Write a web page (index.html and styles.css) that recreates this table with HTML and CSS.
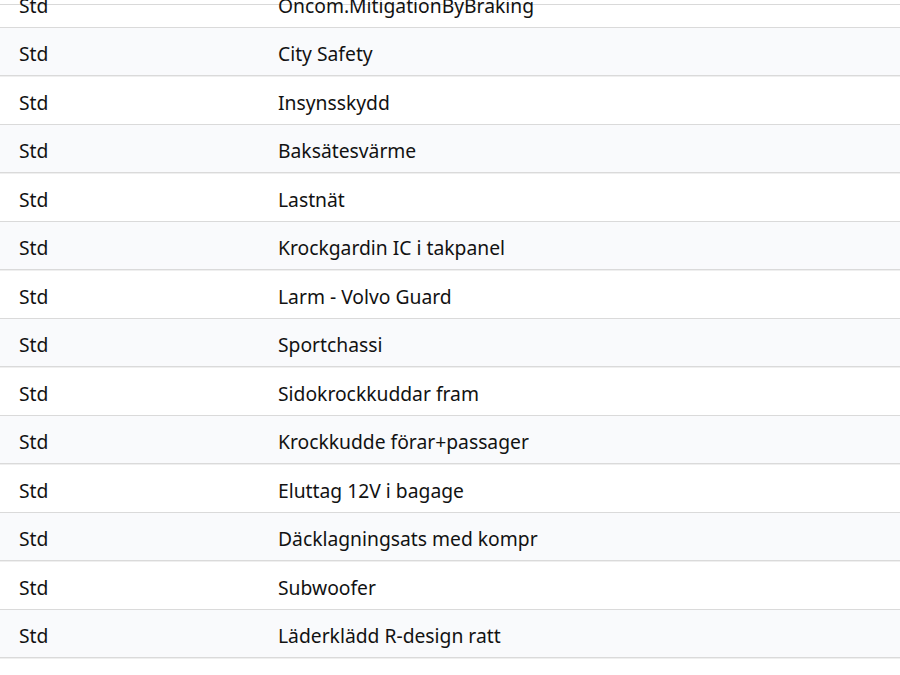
FILE: index.html
```html
<!DOCTYPE html>
<html lang="sv">
<head>
<meta charset="utf-8">
<title>Utrustning</title>
<link rel="stylesheet" href="styles.css">
</head>
<body>
<div class="frame">
  <div class="table">
    <div class="row"><div class="c1">Std</div><div class="c2">Oncom.MitigationByBraking</div></div>
    <div class="row"><div class="c1">Std</div><div class="c2">City Safety</div></div>
    <div class="row"><div class="c1">Std</div><div class="c2">Insynsskydd</div></div>
    <div class="row"><div class="c1">Std</div><div class="c2">Baksätesvärme</div></div>
    <div class="row"><div class="c1">Std</div><div class="c2">Lastnät</div></div>
    <div class="row"><div class="c1">Std</div><div class="c2">Krockgardin IC i takpanel</div></div>
    <div class="row"><div class="c1">Std</div><div class="c2">Larm - Volvo Guard</div></div>
    <div class="row"><div class="c1">Std</div><div class="c2">Sportchassi</div></div>
    <div class="row"><div class="c1">Std</div><div class="c2">Sidokrockkuddar fram</div></div>
    <div class="row"><div class="c1">Std</div><div class="c2">Krockkudde förar+passager</div></div>
    <div class="row"><div class="c1">Std</div><div class="c2">Eluttag 12V i bagage</div></div>
    <div class="row"><div class="c1">Std</div><div class="c2">Däcklagningsats med kompr</div></div>
    <div class="row"><div class="c1">Std</div><div class="c2">Subwoofer</div></div>
    <div class="row wm-row"><div class="c1">Std</div><div class="c2">Läderklädd R-design ratt</div><span class="watermark">KLARAVIK</span></div>
    <div class="row"><div class="c1">Std</div><div class="c2">Farthållare</div></div>
  </div>
</div>
</body>
</html>
```

FILE: styles.css
```css
html, body {
  margin: 0;
  padding: 0;
  background: #ffffff;
  overflow: hidden;
}
body {
  font-family: "Noto Sans", "Open Sans", sans-serif;
  font-size: 19.3px;
  color: #121212;
}
.frame {
  margin-top: 4px;
  border-top: 1px solid #d9d9d9;
}
.table {
  margin-top: -26px;
}
.row {
  position: relative;
  display: flex;
  align-items: center;
  height: 41.5px;
  padding-top: 6px;
  border-bottom: 1px solid #dadada;
  box-shadow: 0 1px 0 #efefef;
  line-height: 26px;
}
.row:nth-child(even) {
  background: #f9fafc;
}
.c1 {
  width: 278px;
  padding-left: 19px;
  box-sizing: border-box;
  flex: none;
}
.c2 {
  flex: 1;
}
.watermark {
  position: absolute;
  left: 625px;
  top: 3px;
  font-family: "Liberation Sans", sans-serif;
  font-weight: 700;
  font-size: 46px;
  letter-spacing: 2px;
  color: rgba(0, 0, 0, 0.012);
  line-height: 46px;
}
```
